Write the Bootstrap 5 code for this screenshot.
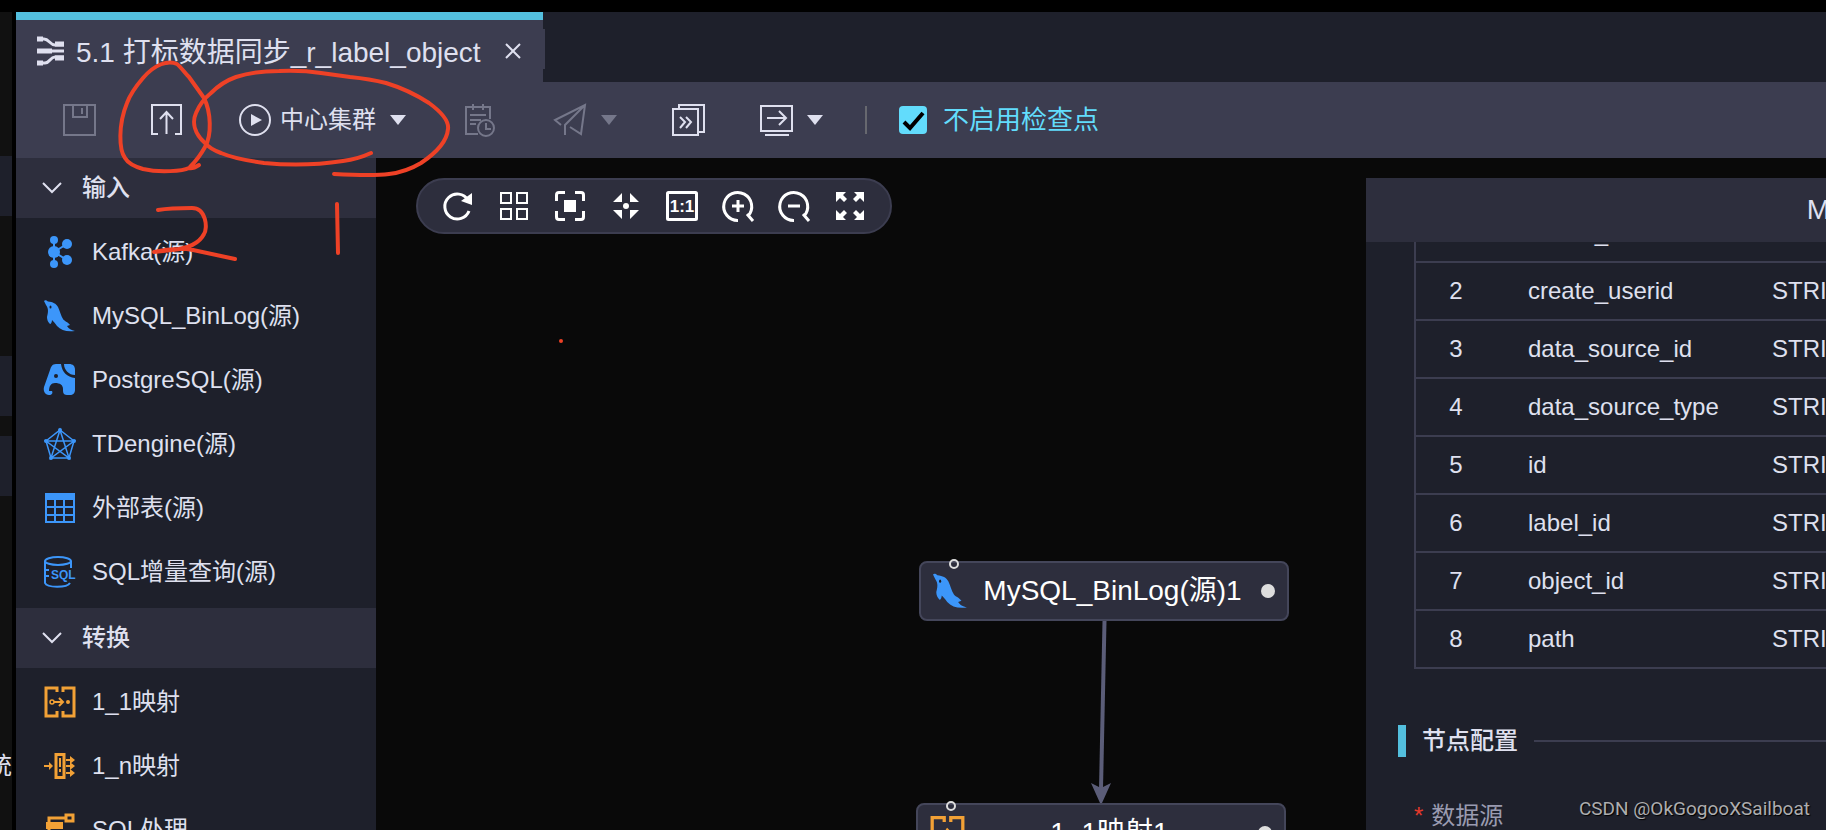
<!DOCTYPE html>
<html lang="zh-CN">
<head>
<meta charset="utf-8">
<meta name="viewport" content="width=device-width, initial-scale=1">
<title>打标数据同步</title>
<link href="https://cdn.jsdelivr.net/npm/bootstrap@5.3.0/dist/css/bootstrap.min.css" rel="stylesheet">
<style>
:root{--ink:#dfe0ef;--panel:#1e202b;--head:#2d2e3d;--bar:#3c3d50;--cyan:#53bfde;--blue:#3c96fa;--orange:#f2a136}
body{background:#000;color:var(--ink);font-family:"Liberation Sans","Noto Sans CJK SC",sans-serif;font-size:24px;line-height:32px}
svg{display:block;flex:none;overflow:visible}
button{color:inherit}
.workspace{padding-top:12px}
.rail{width:12px;background:#111;padding-top:144px;margin-right:4px}
.rail-band{height:60px;background:var(--panel);flex:none}
.rail-gap{margin-top:140px}
.rail-near{margin-top:20px}
.rail-word{margin-top:254px;white-space:nowrap}
.min-0{min-width:0;min-height:0}
.tabstrip{background:var(--panel);height:70px;flex:none}
.doc-tab{border-top:8px solid var(--cyan);background:var(--bar);width:527px;padding:0 22px 0 20px;font-size:28px}
.doc-title{margin:4px 0 0 10px}
.tab-edge{width:2px;height:40px;background:var(--bar)}
.toolbar{background:var(--bar);height:76px;flex:none;padding-left:47px}
.tool{background:none;border:0;padding:0;display:flex;align-items:center}
.dim{color:#75778a}
.cluster{margin-left:56px}
.gap-a{margin-left:55px}.gap-b{margin-left:58px}
.caret{margin-left:14px}
.rule{width:2px;height:28px;background:#67686f;margin:0 32px 0 42px}
.check-box.form-check-input{width:28px;height:28px;margin:0;border:0;border-radius:4px;background-color:#62dcfc}
.check-box.form-check-input:checked{background-color:#62dcfc;background-size:28px;background-image:url("data:image/svg+xml,%3Csvg xmlns='http://www.w3.org/2000/svg' viewBox='0 0 28 28'%3E%3Cpath d='M5 16l6 6L24 7' fill='none' stroke='%23000' stroke-width='4'/%3E%3C/svg%3E")}
.check-text{color:#62dcfc;font-size:26px;margin-left:16px}
.side{width:360px;background:var(--panel)}
.group-head{height:60px;background:var(--head);padding:0 26px;gap:20px;font-weight:500;width:100%;flex:none}
.side-list{padding:2px 0 4px}
.side-list a{height:64px;padding-left:28px;gap:16px;color:var(--ink)}
.side-list .blue,.blue{color:var(--blue)}.side-list .orange,.orange{color:var(--orange)}
.canvas{background:#090909}
.pill{left:40px;top:20px;height:56px;padding:0 24px;gap:24px;border:2px solid var(--bar);background:var(--head);border-radius:28px;color:#fff}
.flow-node{width:370px;height:60px;border:2px solid #44465a;border-radius:8px;background:var(--head);color:#fff;font-size:28px;padding:0 12px}
.flow-node .port{left:28px;top:-4px;width:10px;height:10px;border:2px solid #ddd;border-radius:50%}
.state{width:14px;height:14px;border-radius:50%;background:#ddd;margin-left:4px}
.n1{left:543px;top:403px}.n2{left:540px;top:645px}
.link-line{left:700px;top:463px}
.props{width:460px;background:#090909;padding-top:20px}
.props-inner{width:1140px}
.props-head{height:64px;background:var(--head);font-size:28px;flex:none}
.props-body{background:var(--panel)}
.fields{width:1044px;margin:-38px 0 0 48px;color:var(--ink)}
.fields td{height:58px;padding:0;border-bottom:2px solid var(--bar)}
.fields tr td:first-child{border-left:2px solid var(--bar);width:81px;text-align:center}
.fields td:nth-child(2){padding-left:32px;width:276px}
.section-head{margin:56px 48px 0 32px;font-weight:500}
.section-bar{width:8px;height:32px;background:var(--cyan);margin-right:16px}
.section-line{height:2px;background:var(--bar);margin-left:16px}
.field-label{color:#9a9bb0;margin:43px 0 0 48px}
.star{color:#e5392b;margin-right:8px}
.credit{right:16px;bottom:8px;font-family:Roboto,sans-serif;font-size:19px;line-height:26px;color:#adadaf;text-shadow:1px 1px 1px #000}
</style>
</head>
<body class="vh-100 overflow-hidden position-relative">
<svg class="d-none" aria-hidden="true">
<symbol id="i-caret" viewBox="0 0 16 10"><path d="M0 0h16L8 10z" fill="currentColor"/></symbol>
<symbol id="i-down" viewBox="0 0 20 12"><path d="M1 1l9 9 9-9" fill="none" stroke="currentColor" stroke-width="2"/></symbol>
<symbol id="i-mysql" viewBox="0 0 32 32"><path fill="currentColor" d="M0 1C1 0 2 0 4 1.500c5 .5 8 2 10 5.500 2 4 3 9 5 12 1 2 5 3 7 6l-3 1c2 3 4 4 8 5-8 1-14-.5-18-5-2-3-4-5-5-6 0 2-1 4-2 4-2-2-3-4-3-7C4 13 5 9 2 5z"/><ellipse cx="6.500" cy="7" rx="1" ry="1.500" fill="#1e202b"/></symbol>
<symbol id="i-map" viewBox="0 0 32 32"><path d="M13 6V2H2v28h11v-5M19 6V2h11v28H19v-5" fill="none" stroke="currentColor" stroke-width="3"/><circle cx="8" cy="16" r="2" fill="none" stroke="currentColor" stroke-width="1.500"/><path d="M10 16h9M15 12l4 4-4 4" fill="none" stroke="currentColor" stroke-width="2"/><circle cx="24" cy="16" r="2" fill="currentColor"/></symbol>
</svg>

<div class="workspace d-flex vh-100">
<aside class="rail d-flex flex-column overflow-hidden flex-shrink-0">
<div class="rail-band"></div><div class="rail-band rail-gap"></div><div class="rail-band rail-near"></div>
<div class="rail-word d-flex justify-content-end">统</div>
</aside>

<div class="flex-grow-1 d-flex flex-column min-0">
<header class="tabstrip d-flex align-items-stretch">
<div class="doc-tab d-flex align-items-center">
<svg width="30" height="30" viewBox="0 0 30 30" fill="none" stroke="currentColor"><path d="M1 3h7c5 0 6 6 11 6h9M1 15h13M1 27h8c5 0 5-6 10-6h9M8 15h20" stroke-width="3"/><path d="M1 3h6M1 15h15M1 27h6M19 8h9M19 22h9" stroke-width="5"/></svg>
<span class="doc-title text-nowrap">5.1 打标数据同步_r_label_object</span>
<button class="tool ms-auto" aria-label="关闭"><svg width="16" height="16" viewBox="0 0 16 16" stroke="currentColor" stroke-width="2"><path d="M1 1l14 14M15 1L1 15"/></svg></button>
</div>
<div class="tab-edge align-self-center mt-1"></div>
</header>

<nav class="toolbar d-flex align-items-center">
<button class="tool dim" aria-label="保存"><svg width="33" height="32" viewBox="0 0 33 32" fill="none" stroke="currentColor" stroke-width="2"><path d="M1 1h31v30H1zM10 1v12h14V1M19 4v6"/></svg></button>
<button class="tool gap-a" aria-label="发布"><svg width="31" height="32" viewBox="0 0 31 32" fill="none" stroke="currentColor" stroke-width="2"><path d="M7 30H1V1h29v29h-6M15.500 30V9M9 15l6.500-7 6.500 7"/></svg></button>
<button class="tool cluster"><svg width="34" height="34" viewBox="0 0 34 34"><circle cx="17" cy="17" r="15" fill="none" stroke="currentColor" stroke-width="2"/><path d="M13 11l11 6-11 6z" fill="currentColor"/></svg><span class="ms-2 text-nowrap">中心集群</span><svg class="caret" width="16" height="10"><use href="#i-caret"/></svg></button>
<button class="tool dim gap-b" aria-label="定时"><svg width="32" height="34" viewBox="0 0 32 34" fill="none" stroke="currentColor" stroke-width="2"><path d="M14 31H2V4h24v12M9 1v6M19 1v6M6 12h16M6 17h11M6 21h6M22 20v6h5"/><circle cx="22" cy="25" r="8"/></svg></button>
<button class="tool dim gap-b" aria-label="提交"><svg width="33" height="34" viewBox="0 0 33 34" fill="none" stroke="currentColor" stroke-width="2"><path d="M7 22L1 17 31 2l-4 29-11-7M31 2L11 22v10"/></svg><svg class="caret" width="16" height="10"><use href="#i-caret"/></svg></button>
<button class="tool gap-a" aria-label="批量"><svg width="33" height="32" viewBox="0 0 33 32" fill="none" stroke="currentColor" stroke-width="2"><path d="M1 5h25v26H1zM7 5V1h25v27h-6M8 13l5 5-5 6M14 13l5 5-5 6"/></svg></button>
<button class="tool gap-a" aria-label="导出"><svg width="33" height="32" viewBox="0 0 33 32" fill="none" stroke="currentColor" stroke-width="2"><path d="M1 2h31v25H1zM7 14h19M19 7l7 7-7 7M5 31h24"/></svg><svg class="caret" width="16" height="10"><use href="#i-caret"/></svg></button>
<div class="rule"></div>
<input class="form-check-input check-box" type="checkbox" id="nocheck" checked><label class="check-text text-nowrap" for="nocheck">不启用检查点</label>
</nav>

<main class="d-flex flex-grow-1 min-0">
<aside class="side flex-shrink-0 overflow-hidden">
<button class="tool group-head"><svg width="20" height="12"><use href="#i-down"/></svg>输入</button>
<nav class="side-list">
<a href="#" class="d-flex align-items-center text-decoration-none"><svg class="blue" width="32" height="32" viewBox="0 0 32 32" fill="currentColor"><circle cx="10" cy="4" r="4"/><circle cx="10" cy="28" r="4"/><circle cx="10" cy="16" r="6"/><circle cx="23" cy="8" r="5"/><circle cx="23" cy="24" r="5"/><path d="M10 4v24M23 8l-13 8 13 8" fill="none" stroke="currentColor" stroke-width="2"/></svg>Kafka(源)</a>
<a href="#" class="d-flex align-items-center text-decoration-none"><svg class="blue" width="32" height="32"><use href="#i-mysql"/></svg>MySQL_BinLog(源)</a>
<a href="#" class="d-flex align-items-center text-decoration-none"><svg class="blue" width="32" height="32" viewBox="0 0 32 32"><path fill="currentColor" d="M17 0h-5C8 0 7 3 6 6L0 23c-1 4 1 8 5 8 3 0 4-2 3-4H5c0-5 2-8 6-8 5 0 8 2 8 6v2c0 3 2 4 4 4h3c3 0 5-2 5-5V14c-8-1-13-6-14-14zM20 0c0 6 5 11 11 11V6c0-4-2-6-6-6z"/><circle cx="12" cy="12" r="2" fill="#1e202b"/></svg>PostgreSQL(源)</a>
<a href="#" class="d-flex align-items-center text-decoration-none"><svg class="blue" width="32" height="32" viewBox="0 0 32 32"><path d="M16 2l14 11-5 17H7L2 13zM16 2L7 30l23-17H2l23 17z" fill="none" stroke="currentColor" stroke-width="1.500"/><g fill="currentColor"><circle cx="16" cy="2" r="2"/><circle cx="30" cy="13" r="2"/><circle cx="25" cy="30" r="2"/><circle cx="7" cy="30" r="2"/><circle cx="2" cy="13" r="2"/></g></svg>TDengine(源)</a>
<a href="#" class="d-flex align-items-center text-decoration-none"><svg class="blue" width="32" height="32" viewBox="0 0 32 32" fill="none" stroke="currentColor"><path d="M2 2h28v28H2zM2 15h28M2 23h28M11 6v24M20 6v24" stroke-width="2"/><path d="M1 4.500h30" stroke-width="7"/></svg>外部表(源)</a>
<a href="#" class="d-flex align-items-center text-decoration-none"><svg class="blue" width="32" height="32" viewBox="0 0 32 32" fill="none" stroke="currentColor" stroke-width="2"><ellipse cx="14" cy="5" rx="13" ry="4"/><path d="M1 5v22c2 5 22 5 25 0M27 5v7M1 14h4M1 20h4"/><text x="7" y="23" font-size="12" font-weight="700" font-family="Liberation Sans" fill="currentColor" stroke="none">SQL</text></svg>SQL增量查询(源)</a>
</nav>
<button class="tool group-head"><svg width="20" height="12"><use href="#i-down"/></svg>转换</button>
<nav class="side-list">
<a href="#" class="d-flex align-items-center text-decoration-none"><svg class="orange" width="32" height="32"><use href="#i-map"/></svg>1_1映射</a>
<a href="#" class="d-flex align-items-center text-decoration-none"><svg class="orange" width="32" height="32" viewBox="0 0 32 32" fill="none" stroke="currentColor" stroke-width="3"><path d="M12 4.500h8v23h-8z"/><path d="M0 16h6M22 10h5M22 16h5M22 23h5M16 8v9M16 19v3" stroke-width="2"/><path d="M5 12l4 4-4 4zM26 6l5 4-5 4zM26 12l5 4-5 4zM26 19l5 4-5 4z" fill="currentColor" stroke="none"/></svg>1_n映射</a>
<a href="#" class="d-flex align-items-center text-decoration-none"><svg class="orange" width="32" height="32" viewBox="0 0 32 32" fill="none" stroke="currentColor" stroke-width="3"><path d="M22 1h7v6h-7zM22 4H5v4"/><path d="M2 8h17v7H2z" fill="currentColor" stroke="none"/><path d="M5 15v12h18"/></svg>SQL处理</a>
</nav>
</aside>

<section class="canvas flex-grow-1 position-relative overflow-hidden">
<div class="pill position-absolute d-flex align-items-center">
<button class="tool" aria-label="刷新"><svg width="32" height="32" viewBox="0 0 32 32"><path d="M27 21a12.500 12.500 0 1 1-1-11" fill="none" stroke="currentColor" stroke-width="3"/><path d="M30 3v12l-11-4z" fill="currentColor"/></svg></button>
<button class="tool" aria-label="布局"><svg width="32" height="32" viewBox="0 0 32 32" fill="none" stroke="currentColor" stroke-width="2"><path d="M3 3h10v10H3zM19 3h10v10H19zM3 19h10v10H3zM19 19h10v10H19z"/></svg></button>
<button class="tool" aria-label="适应"><svg width="32" height="32" viewBox="0 0 32 32"><path d="M11 2.500H5q-2.500 0-2.500 2.500v6M21 2.500h6q2.500 0 2.500 2.500v6M11 29.500H5q-2.500 0-2.500-2.500v-6M21 29.500h6q2.500 0 2.500-2.500v-6" fill="none" stroke="currentColor" stroke-width="3"/><path d="M10 10h12v12H10z" fill="currentColor"/></svg></button>
<button class="tool" aria-label="居中"><svg width="32" height="32" viewBox="0 0 32 32" fill="currentColor"><path d="M12 3v9H3zM20 3v9h9zM12 29v-9H3zM20 29v-9h9z"/><circle cx="16" cy="16" r="3"/></svg></button>
<button class="tool" aria-label="原始大小"><svg width="32" height="32" viewBox="0 0 32 32"><rect x="1.500" y="2.500" width="29" height="27" rx="1" fill="none" stroke="currentColor" stroke-width="3"/><text x="16" y="22" text-anchor="middle" font-size="17" font-weight="700" font-family="Liberation Sans" fill="currentColor">1:1</text></svg></button>
<button class="tool" aria-label="放大"><svg width="32" height="32" viewBox="0 0 32 32" fill="none" stroke="currentColor" stroke-width="3"><path d="M16 30.500A14 14 0 1 1 26 26M25 24l6 7M10 16h12M16 10v12"/></svg></button>
<button class="tool" aria-label="缩小"><svg width="32" height="32" viewBox="0 0 32 32" fill="none" stroke="currentColor" stroke-width="3"><path d="M16 30.500A14 14 0 1 1 26 26M25 24l6 7M10 16h12"/></svg></button>
<button class="tool" aria-label="全屏"><svg width="32" height="32" viewBox="0 0 32 32" fill="currentColor"><path d="M2 2h10L9 5l4 4-3 3-4-4-4 4zM30 2H20l3 3-4 4 3 3 4-4 4 4zM2 30h10l-3-3 4-4-3-3-4 4-4-4zM30 30H20l3-3-4-4 3-3 4 4 4-4z"/></svg></button>
</div>
<svg class="link-line position-absolute" width="60" height="190" viewBox="0 0 60 190"><path d="M28.500 0L25 168" stroke="#5b5d78" stroke-width="4"/><path d="M15 162l10 5 10-5-9 20h-2z" fill="#5b5d78"/></svg>
<div class="flow-node n1 position-absolute d-flex align-items-center"><span class="port position-absolute"></span><svg class="blue" width="35" height="36"><use href="#i-mysql"/></svg><span class="flex-grow-1 text-center text-nowrap">MySQL_BinLog(源)1</span><span class="state"></span></div>
<div class="flow-node n2 position-absolute d-flex align-items-center"><span class="port position-absolute"></span><svg class="orange" width="35" height="36"><use href="#i-map"/></svg><span class="flex-grow-1 text-center text-nowrap">1_1映射1</span><span class="state"></span></div>
</section>

<aside class="props flex-shrink-0 overflow-hidden">
<div class="props-inner h-100 d-flex flex-column">
<div class="props-head d-flex align-items-center justify-content-center">MySQL_BinLog(源)1</div>
<div class="props-body flex-grow-1 overflow-hidden min-0">
<table class="fields">
<tbody>
<tr><td>1</td><td>create_time</td><td>STRING</td></tr>
<tr><td>2</td><td>create_userid</td><td>STRING</td></tr>
<tr><td>3</td><td>data_source_id</td><td>STRING</td></tr>
<tr><td>4</td><td>data_source_type</td><td>STRING</td></tr>
<tr><td>5</td><td>id</td><td>STRING</td></tr>
<tr><td>6</td><td>label_id</td><td>STRING</td></tr>
<tr><td>7</td><td>object_id</td><td>STRING</td></tr>
<tr><td>8</td><td>path</td><td>STRING</td></tr>
</tbody>
</table>
<div class="section-head d-flex align-items-center"><span class="section-bar"></span>节点配置<span class="section-line flex-grow-1"></span></div>
<div class="field-label"><span class="star">*</span>数据源</div>
</div>
</div>
</aside>
</main>
</div>
</div>

<!-- hand-drawn review marks over the workspace -->
<svg class="position-absolute top-0 start-0 pe-none" width="600" height="400" viewBox="0 0 600 400" fill="none" stroke="#ee4126" stroke-width="4" stroke-linecap="round" stroke-linejoin="round">
<path d="M199 165Q193 169 189 168C183 171 160 173 143 169Q129 165 125 158C119 150 118 125 127 103Q131 92 143 78C155 64 168 60 177 64C181 67 184 72 189 77Q199 91 204 98C211 112 212 135 205 147Q199 158 190 167"/>
<path d="M371 153Q358 159 343 161C310 166 285 165 264 163Q235 159 221 153Q210 149 205 143C194 133 192 122 196 113Q201 101 211 93Q222 82 236 77Q255 71 279 71Q302 70 321 73L350 77Q370 79 386 83Q409 90 429 103C444 114 449 122 448 129C447 141 436 153 421 163Q406 172 389 174C375 176 352 175 334 174"/>
<path d="M337 204l1 49M158 210C170 208 184 208 192 208C206 208 208 228 204 234C198 246 182 249 172 250L154 252Q176 247 193 250L235 259"/>
<circle cx="561" cy="341" r="2" fill="#ee4126" stroke="none"/>
</svg>
<div class="credit position-absolute">CSDN @OkGogooXSailboat</div>
<script src="https://cdn.jsdelivr.net/npm/bootstrap@5.3.0/dist/js/bootstrap.bundle.min.js"></script>
</body>
</html>
